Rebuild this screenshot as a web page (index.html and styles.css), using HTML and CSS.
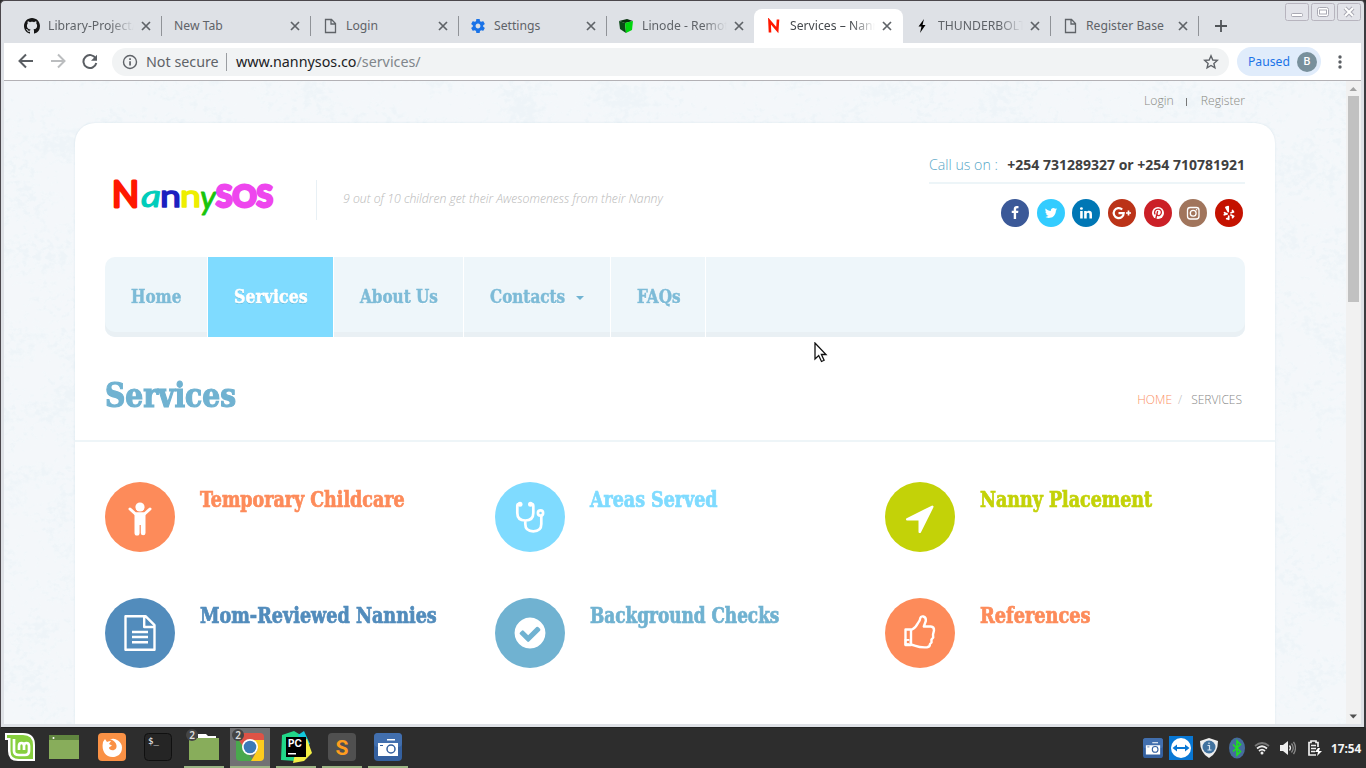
FILE: index.html
```html
<!DOCTYPE html>
<html lang="en">
<head>
<meta charset="utf-8">
<title>Services – Nanny SOS</title>
<link rel="stylesheet" href="styles.css">
</head>
<body>
<svg width="0" height="0" class="defs">
  <symbol id="close" viewBox="0 0 10 10"><path d="M1 1l8 8M9 1l-8 8" stroke="#5f6368" stroke-width="1.7"/></symbol>
  <symbol id="file" viewBox="0 0 16 16"><path d="M3.5 1.5h6l4 4v9h-10zM9 1.5v4.500h4.500" fill="none" stroke="#5f6368" stroke-width="1.3"/></symbol>
  <symbol id="camera" viewBox="0 0 28 28">
    <rect width="28" height="28" rx="4" fill="#34609f"/><rect width="28" height="14" rx="4" fill="#426fae"/>
    <path d="M4 10h20v13H4zM13 6h8v1.500h-8z" fill="#fff"/><circle cx="17" cy="16" r="4" fill="#fff" stroke="#34609f" stroke-width="1.500"/><rect x="6" y="12" width="3" height="1" fill="#34609f"/>
  </symbol>
</svg>
<div class="window">
  <header class="tabs">
    <div class="tab"><svg class="fav" viewBox="0 0 16 16"><path fill="#161616" d="M8 0C3.580 0 0 3.580 0 8c0 3.540 2.290 6.530 5.470 7.590.4.070.550-.170.550-.380 0-.190-.010-.820-.010-1.490-2.010.370-2.530-.490-2.690-.940-.090-.230-.480-.940-.820-1.130-.280-.150-.680-.520-.010-.530.630-.010 1.080.580 1.230.820.720 1.210 1.870.870 2.330.660.070-.520.280-.870.510-1.070-1.780-.2-3.640-.890-3.640-3.950 0-.870.310-1.590.820-2.150-.080-.2-.360-1.020.080-2.120 0 0 .670-.210 2.200.820.640-.180 1.320-.270 2-.270s1.360.090 2 .270c1.530-1.040 2.200-.820 2.200-.820.440 1.100.160 1.920.080 2.120.510.560.820 1.270.820 2.150 0 3.070-1.870 3.750-3.650 3.950.290.250.540.730.540 1.480 0 1.070-.010 1.930-.010 2.200 0 .210.150.460.550.380A8.010 8.010 0 0 0 16 8c0-4.420-3.580-8-8-8z"/></svg><span class="label fade">Library-Project/</span><svg class="x"><use href="#close"/></svg></div>
    <div class="tab"><span class="label">New Tab</span><svg class="x"><use href="#close"/></svg></div>
    <div class="tab"><svg class="fav"><use href="#file"/></svg><span class="label">Login</span><svg class="x"><use href="#close"/></svg></div>
    <div class="tab"><svg class="fav" viewBox="0.500 0.500 23 23"><path fill="#1a73e8" d="M19.430 12.980c.040-.320.070-.640.070-.980s-.030-.660-.070-.980l2.110-1.650c.190-.150.240-.420.120-.640l-2-3.460c-.120-.220-.390-.3-.610-.220l-2.490 1c-.520-.4-1.080-.730-1.690-.980l-.380-2.650C14.460 2.180 14.250 2 14 2h-4c-.250 0-.460.180-.490.420l-.380 2.650c-.610.250-1.170.590-1.690.980l-2.490-1c-.230-.090-.490 0-.610.220l-2 3.460c-.130.220-.070.490.120.640l2.110 1.650c-.040.320-.070.650-.070.980s.030.660.070.980l-2.110 1.650c-.190.150-.240.420-.120.640l2 3.460c.120.220.390.3.610.220l2.490-1c.520.4 1.080.730 1.690.980l.380 2.650c.030.240.240.420.490.420h4c.250 0 .460-.180.490-.420l.380-2.650c.610-.250 1.170-.590 1.690-.980l2.490 1c.230.090.490 0 .610-.220l2-3.460c.120-.220.070-.490-.120-.640l-2.110-1.650zM12 15.500c-1.930 0-3.500-1.570-3.500-3.500s1.570-3.500 3.500-3.500 3.500 1.570 3.500 3.500-1.570 3.500-3.500 3.500z"/></svg><span class="label">Settings</span><svg class="x"><use href="#close"/></svg></div>
    <div class="tab tab-plain"><svg class="fav" viewBox="0 0 16 16"><path d="M1 3l8-2 6 2-8 2z" fill="#06320c"/><path d="M1 3l6 2 1 10-6-4z" fill="#0a4a16"/><path d="M7 5l8-2-1 9-6 3z" fill="#00d60d"/></svg><span class="label fade">Linode - Remot</span><svg class="x"><use href="#close"/></svg></div>
    <div class="tab tab-active"><svg class="fav" viewBox="0 0 16 16"><path d="M4 14.500L3.500 3l7.800 9L12 1.500" fill="none" stroke="#ff1800" stroke-width="2.600"/></svg><span class="label fade">Services – Nann</span><svg class="x"><use href="#close"/></svg></div>
    <div class="tab"><svg class="fav" viewBox="0 0 16 16"><path d="M10 1L4.500 8.500h3L6 15l5.500-8h-3z"/></svg><span class="label fade">THUNDERBOLT</span><svg class="x"><use href="#close"/></svg></div>
    <div class="tab"><svg class="fav"><use href="#file"/></svg><span class="label">Register Base</span><svg class="x"><use href="#close"/></svg></div>
    <svg class="plus" viewBox="0 0 12 12"><path d="M6 0v12M0 6h12" stroke="#505458" stroke-width="1.800"/></svg>
    <div class="controls">
      <svg viewBox="0 0 24 18"><rect class="cbox" x=".5" y=".5" width="23" height="17" rx="2"/><rect class="cglyph" x="6.500" y="10.500" width="11" height="3" rx="1"/></svg>
      <svg viewBox="0 0 24 18"><rect class="cbox" x=".5" y=".5" width="23" height="17" rx="2"/><rect class="cglyph" x="6.500" y="4.500" width="11" height="9" rx="2"/><rect class="cglyph" x="8.500" y="7" width="7" height="4"/></svg>
      <svg viewBox="0 0 24 18"><rect class="cbox" x=".5" y=".5" width="23" height="17" rx="2"/><path d="M8 5l8 8M16 5l-8 8" stroke="#a9a9b3" stroke-width="4"/><path d="M8 5l8 8M16 5l-8 8" stroke="#fff" stroke-width="2"/></svg>
    </div>
  </header>
  <div class="toolbar">
    <svg class="navicons" viewBox="0 0 78 37"><g fill="none" stroke-width="2"><path d="M29 18H16M22 11.500L15.500 18l6.500 6.500" stroke="#5a5e63"/><path d="M47 18h13M54 11.500L60.500 18 54 24.500" stroke="#bbbdbf"/></g></svg>
    <svg class="reload" viewBox="0 0 16 16"><path d="M13.700 4.500A6.500 6.500 0 1 0 14.300 9" fill="none" stroke="#5a5e63" stroke-width="2"/><path d="M15 .8v6H9z" fill="#5a5e63"/></svg>
    <div class="omnibox">
      <svg class="info" viewBox="0 0 16 16"><circle cx="8" cy="8" r="6.500" fill="none" stroke="#5f6368" stroke-width="1.400"/><path d="M7.200 7.200h1.700v4.300H7.200zM7.200 4.300h1.700V6H7.200z" fill="#5f6368"/></svg>
      <span class="notsecure">Not secure</span><span class="url">www.nannysos.co<em>/services/</em></span>
      <svg class="star" viewBox="0 0 16 16"><path d="M8 1.800l1.800 4.200 4.500.4-3.400 3 1 4.400L8 11.500l-3.900 2.300 1-4.400-3.400-3 4.500-.4z" fill="none" stroke="#5f6368" stroke-width="1.400"/></svg>
    </div>
    <div class="paused"><span>Paused</span><b>B</b></div>
    <svg class="dots" viewBox="0 0 4 14"><g fill="#5a5e63"><circle cx="2" cy="2" r="1.700"/><circle cx="2" cy="7" r="1.700"/><circle cx="2" cy="12" r="1.700"/></g></svg>
  </div>
  <div class="viewport">
    <div class="site">
      <svg class="texture" width="1342" height="643">
        <filter id="grain" x="0" y="0" width="1" height="1">
          <feTurbulence type="fractalNoise" baseFrequency=".022 .026" numOctaves="2" seed="5" result="broad"/>
          <feTurbulence type="fractalNoise" baseFrequency=".16 .19" numOctaves="4" seed="8" result="fine"/>
          <feComposite in="broad" in2="fine" operator="arithmetic" k2=".6" k3=".6"/>
          <feColorMatrix values="0 0 0 0 1  0 0 0 0 1  0 0 0 0 1  6 0 0 0 -2"/>
        </filter>
        <rect width="1342" height="643" filter="url(#grain)" opacity=".36"/>
      </svg>
      <div class="account"><a>Login</a><i></i><a>Register</a></div>
      <main class="card">
        <div class="masthead">
          <svg class="logo" viewBox="0 0 164 44" aria-label="NannySOS">
            <g font-family="Lato, sans-serif" font-weight="400" stroke-linejoin="round" stroke-linecap="round">
              <text x="-3" y="31" font-size="36" textLength="27" lengthAdjust="spacingAndGlyphs" fill="#ff1800" stroke="#ff1800" stroke-width="3">N</text>
              <text x="26" y="31" font-size="30" textLength="20" lengthAdjust="spacingAndGlyphs" fill="#00cdbb" stroke="#00cdbb" stroke-width="1" font-style="italic">a</text>
              <text x="45" y="31" font-size="31" textLength="21" lengthAdjust="spacingAndGlyphs" fill="#1b1fc0" stroke="#1b1fc0" stroke-width="1.500">n</text>
              <text x="65" y="31" font-size="31" textLength="21" lengthAdjust="spacingAndGlyphs" fill="#eeee00" stroke="#eeee00" stroke-width="1.500">n</text>
              <text x="85" y="33" font-size="32" textLength="16" lengthAdjust="spacingAndGlyphs" fill="#18c40a" stroke="#18c40a" stroke-width=".8" font-style="italic">y</text>
              <text x="101" y="31" font-size="30" font-weight="700" textLength="57" lengthAdjust="spacingAndGlyphs" fill="#ee46ee" stroke="#ee46ee" stroke-width="3">SOS</text>
            </g>
          </svg>
          <p class="tagline">9 out of 10 children get their Awesomeness from their Nanny</p>
          <div class="contact">
            <p class="phone">Call us on : <b>+254 731289327 or +254 710781921</b></p>
            <div class="social">
              <svg viewBox="0 0 28 28"><circle cx="14" cy="14" r="14" fill="#3b5998"/><path transform="translate(7 7) scale(.0078)" d="M1343 12v264h-157q-86 0-116 36t-30 108v189h293l-39 296h-254v759h-306v-759h-255v-296h255v-218q0-186 104-288.500t277-102.500q147 0 228 12z"/></svg>
              <svg viewBox="0 0 28 28"><circle cx="14" cy="14" r="14" fill="#33ccff"/><path transform="translate(7 7) scale(.0078)" d="M1684 408q-67 98-162 167 1 14 1 42 0 130-38 259.500t-115.500 248.500-184.500 210.500-258 146-323 54.500q-271 0-496-145 35 4 78 4 225 0 401-138-105-2-188-64.500t-114-159.500q33 5 61 5 43 0 85-11-112-23-185.500-111.500t-73.500-205.500v-4q68 38 146 41-66-44-105-115t-39-154q0-88 44-163 121 149 294.500 238.500t371.500 99.500q-8-38-8-74 0-134 94.500-228.500t228.500-94.500q140 0 236 102 109-21 205-78-37 115-142 178 93-10 186-50z"/></svg>
              <svg viewBox="0 0 28 28"><circle cx="14" cy="14" r="14" fill="#0077b5"/><path transform="translate(7 7) scale(.0078)" d="M477 625v991h-330v-991h330zm21-306q1 73-50.500 122t-135.500 49h-2q-82 0-132-49t-50-122q0-74 51.500-122.500t134.500-48.500 133 48.500 51 122.500zm1166 729v568h-329v-530q0-105-40.500-164.500t-126.500-59.500q-63 0-105.500 34.500t-63.500 85.500q-11 30-11 81v553h-329q2-399 2-647t-1-296l-1-48h329v144h-2q20-32 41-56t56.500-52 87-43.500 114.500-15.500q171 0 275 113.500t104 332.500z"/></svg>
              <svg viewBox="0 0 28 28"><circle cx="14" cy="14" r="14" fill="#bb3318"/><g fill="none" stroke="#fff" stroke-width="2.200"><path d="M14.200 10.500A5 5 0 1 0 15.700 14.200H10.500"/><path d="M18 14h5M20.500 11.500v5" stroke-width="1.700"/></g></svg>
              <svg viewBox="0 0 28 28"><circle cx="14" cy="14" r="14" fill="#cb2027"/><circle cx="14" cy="14" r="6"/><g fill="none" stroke="#cb2027" stroke-width="1.300"><path d="M13.700 12l-2 8"/><path d="M11.200 15.500c-1.500-2.500-.2-5.300 2.900-5.300 2.500 0 3.700 1.700 3.200 4-.6 2.500-3.500 3.300-4.300 1.300"/></g></svg>
              <svg viewBox="0 0 28 28"><circle cx="14" cy="14" r="14" fill="#a1755c"/><g fill="none" stroke="#fff" stroke-width="1.300"><rect x="8.500" y="8.500" width="11.500" height="11.500" rx="2.700"/><circle cx="14.200" cy="14.200" r="2.900"/></g><circle cx="17.600" cy="10.800" r=".8"/></svg>
              <svg viewBox="0 0 28 28"><circle cx="14" cy="14" r="14" fill="#c41200"/><g stroke="#fff" stroke-linecap="round" stroke-width="1.700" stroke-linejoin="round"><path d="M10.800 8.300l2.500-.8v5.300z" stroke-width="1.500"/><path d="M9.500 13.700l2.700 1.300-2.900.8M13.700 17v3.300l-2-.6M16 16l2.700 1.200-1.200 1.500M16 13.800l2.500-.8-1-1.600"/></g></svg>
            </div>
          </div>
        </div>
        <nav class="menu">
          <a class="m-home"><span>Home</span></a><a class="m-services"><span>Services</span></a><a class="m-about"><span>About Us</span></a><a class="m-contacts"><span>Contacts</span><i class="caret"></i></a><a class="m-faqs"><span>FAQs</span></a>
        </nav>
        <div class="titlebar"><h1>Services</h1><p class="crumbs"><a>HOME</a><i>/</i>SERVICES</p></div>
        <section class="services">
          <article class="orange"><svg viewBox="0 0 70 70"><circle cx="35" cy="35" r="35"/><g fill="#fff"><circle cx="35" cy="25" r="4.600"/><path d="M25 27l5.500 5h9l5.500-5" fill="none" stroke="#fff" stroke-width="3" stroke-linecap="round" stroke-linejoin="round"/><path d="M29.500 30.500h11v20.500a2 2 0 0 1-4.700 0v-8h-1.200v8a2 2 0 0 1-5.100 0z"/></g></svg><h3>Temporary Childcare</h3></article>
          <article class="sky"><svg viewBox="0 0 70 70"><circle cx="35" cy="35" r="35"/><g fill="none" stroke="#fff" stroke-width="2.700"><path d="M25 22h-1.500q-1.200 0-1.200 2v7q0 7.500 8 7.500t8-7.500v-7q0-2-1.300-2H35M30.300 39v3q0 7.300 8 7.300t8-7.300v-8"/><circle cx="45.500" cy="31" r="2.600"/></g><g fill="#fff"><circle cx="25" cy="22.300" r="2.500"/><circle cx="35.500" cy="22.300" r="2.500"/></g></svg><h3>Areas Served</h3></article>
          <article class="lime"><svg viewBox="0 0 70 70"><circle cx="35" cy="35" r="35"/><path fill="#fff" transform="translate(17.200 18.500) scale(.0196)" d="M1593 349l-640 1280q-17 35-57 35-5 0-15-2-22-5-35.500-22.500t-13.500-39.500v-576h-576q-22 0-39.500-13.500t-22.500-35.500 4-42 29-30l1280-640q13-7 29-7 27 0 45 19 15 14 18.500 34.500t-6.500 39.500z"/></svg><h3>Nanny Placement</h3></article>
          <article class="blue"><svg viewBox="0 0 70 70"><circle cx="35" cy="35" r="35"/><path d="M20.500 18.200h20l9 9v24.500h-29zM39.200 18v11h10.300M27 34h16M27 39h16M27 44.300h16" fill="none" stroke="#fff" stroke-width="2.400" stroke-linejoin="round"/></svg><h3>Mom-Reviewed Nannies</h3></article>
          <article class="teal"><svg viewBox="0 0 70 70"><circle cx="35" cy="35" r="35"/><path fill="#fff" transform="translate(17 17) scale(.0201)" d="M1412 734q0-28-18-46l-91-90q-19-19-45-19t-45 19l-408 407-226-226q-19-19-45-19t-45 19l-91 90q-18 18-18 46 0 27 18 45l362 362q19 19 45 19 27 0 46-19l543-543q18-18 18-45zm252 162q0 209-103 385.500t-279.500 279.500-385.500 103-385.500-103-279.500-279.500-103-385.500 103-385.500 279.500-279.500 385.500-103 385.500 103 279.500 279.500 103 385.500z"/></svg><h3>Background Checks</h3></article>
          <article class="orange refs"><svg viewBox="0 0 70 70"><circle cx="35" cy="35" r="35"/><g fill="none" stroke="#fff" stroke-width="2.400" stroke-linejoin="round" stroke-linecap="round"><path d="M27 31.500q3.500-1.500 6-6.500q2-2 2.300-5 .5-2 3-1.500 3 .8 2.500 4.500l-2 5.500h7q3.500.3 3.200 4l-1 4 .2 3-1.700 2v3l-1.500 1.500q0 3-3 3.300-7 .4-11.500-1.500L26 46.500"/><path d="M20.500 31.500H26v15.500h-5.500z"/></g><path d="M19.500 41h5v6h-5z" fill="#fff"/><circle cx="23" cy="44" r="1.300"/></svg><h3>References</h3></article>
        </section>
      </main>
    </div>
    <div class="scrollbar"><svg viewBox="0 0 15 15"><path d="M3.500 10h7.500l-3.700-4z" fill="#a3a3a3"/></svg><div class="thumb"></div><svg class="down" viewBox="0 0 15 15"><path d="M3.500 5.500h7.500l-3.700 4z" fill="#505050"/></svg></div>
  </div>
</div>
<footer class="taskbar">
  <div class="slot first"><svg viewBox="0 0 32 30"><path d="M1 1h18q12 0 12 12v16H14Q4 29 4 19V8H1z" fill="#fff"/><path d="M3 3h16q10 0 10 10v14H15Q6.500 27 6.500 19V6H3z" fill="#87cf3e"/><path d="M10 7v12q0 4 5 4h6q4 0 4-4v-5q0-3-2.500-3T20 14v4M20 14q0-3-2.500-3T15 14v4" fill="none" stroke="#fff" stroke-width="2.700"/></svg></div>
  <div class="slot second"><svg viewBox="0 0 30 24" class="folder"><rect width="30" height="24" fill="#88ad5b"/><rect width="30" height="5" fill="#60853f"/><circle cx="4.500" cy="3" r="1" fill="#fff"/></svg></div>
  <div class="slot"><svg viewBox="0 0 28 28"><rect width="28" height="28" rx="4" fill="#fa9145"/><path d="M5 9l2-3 2 3q2-1 4-1l-2 3 3 1.500-3 2c0 3 5 4 7 1 1.500-3 0-6-3-8q-1-1-3-1 4-2 8 1 4 3 4 7c0 7-5 9.500-9.500 9.500C8 24 3 18 5 9z" fill="#fff"/></svg></div>
  <div class="slot"><svg viewBox="0 0 28 28"><rect x=".5" y=".5" width="27" height="27" rx="4" fill="#252525" stroke="#101010"/><text x="4" y="11" font-size="9" font-family="DejaVu Sans Mono, monospace" fill="#fff">$_</text></svg></div>
  <div class="slot open"><svg viewBox="0 0 30 28" class="folder2"><path d="M9 1h8l2 2h8v4H9z" fill="#fff"/><rect y="5" width="30" height="22" fill="#88ad5b"/></svg><b>2</b></div>
  <div class="slot open current"><svg viewBox="0 0 28 28"><defs><clipPath id="round"><rect width="28" height="28" rx="4"/></clipPath></defs><g clip-path="url(#round)"><path d="M0 0h28v14H0z" fill="#de5346"/><path d="M0 3l10 15 8 10H0z" fill="#49a84d"/><path d="M14 7h14v21H15l7-12z" fill="#fccb1e"/></g><circle cx="14" cy="14" r="8" fill="#fff"/><circle cx="14" cy="14" r="6.300" fill="#3b79b8"/></svg><b>2</b></div>
  <div class="slot open"><svg viewBox="0 0 32 32" class="big"><path d="M2 4l12-4 10 6-8 24L1 29z" fill="#21d789"/><path d="M18 4l6-4 6 13-6 4z" fill="#12c9dc"/><path d="M18 10l9-2 5 14-8 8-11 2z" fill="#f3ef45"/><rect x="6" y="6" width="20" height="20"/><text x="8" y="16" font-size="10" font-weight="700" font-family="Inter, sans-serif" fill="#fff">PC</text><rect x="8" y="22" width="8" height="1.500" fill="#fff"/></svg></div>
  <div class="slot open"><svg viewBox="0 0 28 28"><rect width="28" height="28" rx="4" fill="#505050"/><text x="14" y="21.500" text-anchor="middle" font-size="21" font-weight="700" font-family="Roboto, sans-serif" fill="#ff9d1e">S</text></svg></div>
  <div class="slot open"><svg><use href="#camera"/></svg></div>
  <div class="tray">
    <svg class="t-cam"><use href="#camera"/></svg>
    <svg class="t-team" viewBox="0 0 24 24"><rect width="24" height="24" fill="#0877d4"/><circle cx="12" cy="12" r="10" fill="#fff"/><path d="M3.500 12L8 8.500V11h8V8.500l4.500 3.500-4.500 3.500V13H8v2.500z" fill="#0877d4"/></svg>
    <svg class="t-shield" viewBox="0 0 20 22"><path d="M10 1l9 3q0 12-9 17Q1 16 1 4z" fill="#eee"/><circle cx="10" cy="10" r="6.500" fill="#41729f"/><path d="M8.500 8.500h2v4.500M8.500 13h4M10 5.500v1.500" stroke="#d9e6f2" fill="none" stroke-width="1.200"/></svg>
    <svg class="t-bt" viewBox="0 0 16 22"><ellipse cx="8" cy="11" rx="8" ry="10.500" fill="#466c9d"/><path d="M4 7.500l7.500 7L8 18V4l3.500 3.500-7.500 7" fill="none" stroke="#1fe01f" stroke-width="1.600"/></svg>
    <svg class="t-wifi" viewBox="0 0 16 14"><g fill="none" stroke-width="1.700"><path d="M1 5q7-6 14 0" stroke="#777"/><path d="M3 7.500q5-4.500 10 0M5 10q3-2.700 6 0" stroke="#eee"/></g><circle cx="8" cy="12" r="1.500" fill="#eee"/></svg>
    <svg class="t-vol" viewBox="0 0 16 14"><path d="M0 4h3l5-4v14l-5-4H0z" fill="#eee"/><g fill="none" stroke-width="1.300"><path d="M9.500 4.500q2 2.500 0 5" stroke="#eee"/><path d="M11.500 2.500q3.500 4.500 0 9M13.500.8q4 6 0 12.400" stroke="#888"/></g></svg>
    <svg class="t-bat" viewBox="0 0 14 16"><path d="M8 15H1V2.500h2V1h5v1.500h2V7M3 5.500h5M3 8.500h5M3 11.500h4" fill="none" stroke="#eee" stroke-width="1.700"/><path d="M10 8l-3 4h3l-1 4 5-5h-3l1-3z" fill="#fff"/></svg>
    <time>17:54</time>
  </div>
</footer>
<svg class="cursor" viewBox="0 0 14 21"><path d="M1 1v16l3.700-3.500L7.500 19.500l2.600-1.200-2.700-5.800H12z" fill="#fff" stroke="#111" stroke-width="1.300"/></svg>
</body>
</html>
```
FILE: styles.css
```css
* { box-sizing: border-box; }
body { margin: 0; width: 1366px; height: 768px; overflow: hidden; background: #2d2d2d; font-family: "Noto Sans", sans-serif; }
svg { display: block; flex: none; }
p, h1, h3 { margin: 0; }
i, em { font-style: normal; }
.defs { position: absolute; }

.window { height: 728px; border: 1px solid #4b474c; border-bottom-color: #202020; border-right: 2px solid #3c3c40; border-radius: 5px 5px 0 0; background: #dee1e6; padding: 0 3px 3px; }
.tabs { height: 42px; display: flex; padding: 8px 0 0 10px; }
.tab { width: 148px; height: 34px; flex: none; display: flex; align-items: center; padding: 0 11px; position: relative; }
.tab:first-child { padding-left: 10px; }
.tab:nth-child(1) { width: 148px; margin-right: 1px; }
.tab::after { content: ""; position: absolute; right: 0; top: 7px; width: 1px; height: 20px; background: #909398; }
.tab-plain::after, .tab-active::after { display: none; }
.tab-active { width: 149px; margin-left: -1px; padding-left: 12px; background: #fff; border-radius: 8px 8px 0 0; }
.fav { width: 16px; height: 16px; margin-right: 8px; }
.label { flex: 1; min-width: 0; overflow: hidden; white-space: nowrap; font-size: 12.200px; line-height: 18px; color: #5f6368; }
.tab-active .label { color: #45494d; }
.fade { -webkit-mask-image: linear-gradient(90deg, #000 72%, transparent 100%); mask-image: linear-gradient(90deg, #000 72%, transparent 100%); }
.x { width: 10px; height: 10px; margin-left: 7px; }
.plus { width: 12px; height: 12px; margin: 11px 0 0 16px; }
.controls { display: flex; gap: 2px; margin: -6px 0 0 auto; }
.controls svg { width: 24px; height: 18px; }
.cbox { fill: #e2e3e9; stroke: #b7b4be; }
.cglyph { fill: #fff; stroke: #a9a9b3; }

.toolbar { height: 38px; background: #fff; border-bottom: 1px solid #b3b1b5; display: flex; align-items: center; }
.navicons { width: 78px; height: 37px; }
.reload { width: 16px; height: 16px; }
.omnibox { width: 1117px; height: 28px; margin-left: 14px; border-radius: 14px; background: #f1f3f4; display: flex; align-items: center; padding: 0 10px; font-size: 14px; color: #5f6368; white-space: nowrap; }
.info { width: 16px; height: 16px; margin-right: 8px; }
.notsecure { width: 81px; height: 18px; line-height: 18px; border-right: 1px solid #9a9da1; margin-right: 9px; font-size: 14.300px; }
.url { color: #202124; font-size: 14.300px; }
.url em { color: #80868b; }
.star { width: 16px; height: 16px; margin-left: auto; }
.paused { width: 84px; height: 29px; margin-left: 8px; border-radius: 15px; background: #e0ecfb; display: flex; align-items: center; justify-content: space-between; padding: 0 4px 0 11px; font-size: 12.200px; color: #1a73e8; }
.paused b { width: 20px; height: 20px; border-radius: 50%; background: #78909c; color: #fff; text-align: center; font: 500 11px/20px Roboto, sans-serif; }
.dots { width: 4px; height: 14px; margin-left: 17px; }

.viewport { height: 643px; display: flex; overflow: hidden; background: #eef4f8; }
.site { flex: 1; position: relative; font-family: "Open Sans", sans-serif; }
.texture { position: absolute; inset: 0; }
.account { position: relative; height: 42px; padding: 0 101px 4px 0; display: flex; justify-content: flex-end; align-items: center; font-size: 12.200px; font-weight: 300; color: #8b8b84; }
.account i { width: 1px; height: 8px; background: #777; margin: 3px 14px 0 12px; }
.card { position: relative; width: 1200px; height: 640px; margin-left: 71px; background: #fff; border-radius: 20px 20px 0 0; box-shadow: 0 0 2px rgba(120,160,180,.22); }
.masthead { height: 134px; display: flex; padding: 0 30px 0 40px; }
.logo { width: 164px; height: 44px; margin-top: 53px; overflow: visible; }
.tagline { height: 40px; margin: 57px 0 0 37px; padding-left: 26px; border-left: 1px solid #e8f0f5; font: italic 300 12.230px/38px "Open Sans", sans-serif; color: #b8b8b8; white-space: nowrap; }
.contact { width: 316px; margin-left: auto; }
.phone { height: 61px; padding-top: 32px; border-bottom: 2px solid #edf5f8; font-size: 14.200px; line-height: 20px; font-weight: 300; color: #56a6c6; white-space: nowrap; display: flex; justify-content: space-between; }
.phone b { color: #404040; font-weight: 700; font-size: 14px; }
.social { display: flex; justify-content: space-between; width: 242px; margin: 15px 2px 0 auto; }
.social svg { width: 28px; height: 28px; fill: #fff; }

.menu, h1, h3 { font-family: "DejaVu Serif Condensed", "DejaVu Serif", serif; font-stretch: condensed; font-weight: 700; -webkit-text-stroke: .5px currentColor; }
.menu { height: 80px; margin: 0 30px; border-radius: 10px; overflow: hidden; background: #eef6fa; box-shadow: inset 0 -5px #e9f0f4; display: flex; font-size: 18.500px; color: #7dbbd7; }
.menu a { border-right: 1px solid #fff; padding: 0 0 2px 26px; display: flex; align-items: center; white-space: nowrap; text-shadow: 0 1px #fff; }
.menu span { transform: scaleX(.915); transform-origin: left; }
.m-home { width: 103px; }
.m-services { width: 126px; }
.menu .m-services { background: #7fdbff; color: #fff; text-shadow: 0 1px #66b9da; }
.menu .m-services span { transform: scaleX(.95); }
.m-about { width: 130px; }
.m-contacts { width: 147px; position: relative; }
.m-faqs { width: 95px; }
.caret { position: absolute; left: 112px; top: 39px; border: 4.500px solid transparent; border-top: 4px solid #70b3d2; border-bottom: 0; }
.titlebar { height: 105px; border-bottom: 2px solid #eef5f8; padding: 0 33px 0 30px; display: flex; justify-content: space-between; align-items: center; }
h1 { font-size: 34px; line-height: 40px; color: #70b2d1; transform: scaleX(.92); transform-origin: left; margin-top: 13px; -webkit-text-stroke-width: 1.200px; }
.crumbs { font-size: 12px; font-weight: 300; color: #888; margin-top: 21px; }
.crumbs a { color: #fb9165; }
.crumbs i { margin: 0 9px 0 6px; color: #bbb; }
.services { display: grid; grid-template-columns: repeat(3, 390px); grid-auto-rows: 116px; padding: 40px 0 0 30px; }
.services article { display: flex; gap: 25px; fill: currentColor; }
.services svg { width: 70px; height: 70px; }
h3 { font-size: 21.500px; line-height: 32px; margin-top: 2px; white-space: nowrap; transform: scaleX(.903); transform-origin: left; -webkit-text-stroke-width: .7px; }
.teal h3 { transform: scaleX(.873); }
.refs h3 { transform: scaleX(.917); }
.blue h3 { transform: scaleX(.91); }
.orange { color: #fd8b5a; } .sky { color: #7fdbff; } .lime { color: #c3d208; } .blue { color: #528cbc; } .teal { color: #70b2d1; }

.scrollbar { width: 15px; background: #f1f1f1; position: relative; }
.scrollbar svg { width: 15px; height: 15px; }
.thumb { width: 11px; height: 206px; margin-left: 2px; background: #c1c1c1; }
.scrollbar .down { position: absolute; bottom: 0; left: 0; }

.taskbar { height: 40px; display: flex; background: #2d2d2d; padding-right: 4px; }
.slot { width: 40px; height: 40px; margin-right: 6px; display: flex; align-items: center; justify-content: center; border-bottom: 2px solid transparent; position: relative; }
.slot svg { width: 28px; height: 28px; }
.slot.first { margin-right: 4px; }
.slot.second { margin-right: 8px; }
.slot.first svg { width: 32px; height: 30px; }
.slot .folder { width: 30px; height: 24px; }
.slot .folder2 { width: 30px; height: 28px; }
.slot .big { width: 32px; height: 32px; }
.open { border-bottom-color: #9cb585; }
.current { background: #717173; }
.slot b { position: absolute; left: 2px; top: 1px; width: 12px; height: 12px; border-radius: 50%; background: #454545; color: #ddd; font: 600 10px/12px "Noto Sans", sans-serif; text-align: center; }
.tray { margin-left: auto; display: flex; align-items: center; color: #f4f4f4; }
.t-cam { width: 20px; height: 20px; } .t-team { width: 24px; height: 24px; margin-left: 6px; } .t-shield { width: 20px; height: 22px; margin-left: 6px; }
.t-bt { width: 16px; height: 22px; margin-left: 10px; } .t-wifi { width: 16px; height: 14px; margin-left: 9px; } .t-vol { width: 16px; height: 14px; margin-left: 10px; } .t-bat { width: 14px; height: 16px; margin-left: 12px; }
.tray time { width: 31px; margin-left: 9px; font: 700 11.800px/20px "Noto Sans", sans-serif; white-space: nowrap; }
.cursor { position: absolute; left: 814px; top: 342px; width: 14px; height: 21px; }
```
